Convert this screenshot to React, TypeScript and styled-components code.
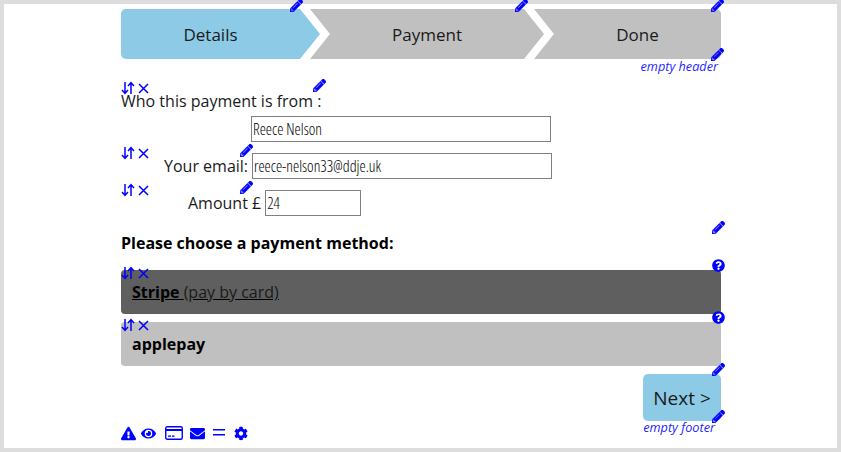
import React from 'react';
import styled, { createGlobalStyle } from 'styled-components';
import {
  FaCog,
  FaEnvelope,
  FaExclamationTriangle,
  FaEye,
  FaPencilAlt,
  FaQuestionCircle,
} from 'react-icons/fa';

const GlobalStyle = createGlobalStyle`
  html, body {
    margin: 0;
    padding: 0;
    background: #ffffff;
  }
`;

const Frame = styled.div`
  box-sizing: border-box;
  width: 841px;
  height: 452px;
  border: 4px solid #dddddd;
  background: #ffffff;
  font-family: 'Open Sans', sans-serif;
  font-size: 16px;
  color: #1a1a1a;
`;

const Shell = styled.div`
  width: 600px;
  margin-left: 117px;
  padding-top: 5px;
`;

const Steps = styled.div`
  position: relative;
  display: flex;
  height: 50px;
`;

const Step = styled.div<{ $width: number; $active?: boolean; $first?: boolean; $last?: boolean }>`
  box-sizing: border-box;
  width: ${(p) => p.$width}px;
  height: 50px;
  margin-left: ${(p) => (p.$first ? 0 : -10)}px;
  padding-left: ${(p) => (p.$first ? 0 : 20)}px;
  padding-right: ${(p) => (p.$last ? 0 : 20)}px;
  display: flex;
  align-items: center;
  justify-content: center;
  font-size: 17px;
  background: ${(p) => (p.$active ? '#8ccae6' : '#c0c0c0')};
  border-radius: ${(p) => (p.$first ? '5px 0 0 5px' : p.$last ? '0 5px 5px 0' : '0')};
  clip-path: polygon(
    0 0,
    ${(p) => (p.$last ? '100% 0, 100% 100%' : 'calc(100% - 20px) 0, 100% 50%, calc(100% - 20px) 100%')},
    0 100%
    ${(p) => (p.$first ? '' : ', 20px 50%')}
  );
`;

const Note = styled.div`
  height: 30px;
  padding-top: 1px;
  padding-right: 3px;
  text-align: right;
  font-size: 12.7px;
  line-height: 12px;
  font-style: italic;
  color: #1f1fff;
`;

const Pin = styled.span<{ $top: number; $left: number }>`
  position: absolute;
  top: ${(p) => p.$top}px;
  left: ${(p) => p.$left}px;
  display: flex;
  color: #0000ff;
  font-size: 13px;
  z-index: 2;
`;

const PencilPin = styled(Pin)`
  svg {
    stroke: currentColor;
    stroke-width: 18px;
  }
`;

const Row = styled.div<{ $indent?: number; $height: number; $gap?: number }>`
  position: relative;
  display: flex;
  align-items: center;
  gap: 4px;
  height: ${(p) => p.$height}px;
  padding-left: ${(p) => p.$indent ?? 0}px;
  margin-bottom: ${(p) => p.$gap ?? 0}px;
`;

const Field = styled.input<{ $width: number }>`
  box-sizing: border-box;
  width: ${(p) => p.$width}px;
  height: 26px;
  padding: 0 0 0 1px;
  border: 1px solid #808080;
  border-radius: 0;
  background: #ffffff;
  font-family: 'Open Sans', sans-serif;
  font-size: 15.7px;
  font-weight: 300;
  font-stretch: 75%;
  color: #000000;
  outline: none;
`;

const Heading = styled.div`
  position: relative;
  height: 22px;
  line-height: 22px;
  margin: 16px 0 16px;
  font-weight: 700;
  color: #000000;
`;

const Method = styled.div<{ $selected?: boolean }>`
  position: relative;
  box-sizing: border-box;
  height: 44px;
  margin-bottom: 8px;
  padding: 11px 11px 0;
  line-height: 22px;
  border-radius: 4px;
  background: ${(p) => (p.$selected ? '#5f5f5f' : '#c0c0c0')};
  color: #000000;
  text-decoration: ${(p) => (p.$selected ? 'underline' : 'none')};
`;

const MethodName = styled.b`
  font-weight: 700;
`;

const MethodHint = styled.span`
  color: #1a1a1a;
`;

const Actions = styled.div`
  position: relative;
  display: flex;
  justify-content: flex-end;
`;

const NextButton = styled.button`
  box-sizing: border-box;
  width: 78px;
  height: 47px;
  padding: 0;
  border: none;
  border-radius: 5px;
  background: #8ccae6;
  font-family: 'Open Sans', sans-serif;
  font-size: 19px;
  color: #1a1a1a;
`;

const FooterNote = styled.div`
  height: 12px;
  margin-top: -1px;
  padding-top: 1px;
  padding-right: 6px;
  text-align: right;
  font-size: 12.7px;
  line-height: 12px;
  font-style: italic;
  color: #1f1fff;
`;

const Toolbar = styled.div`
  display: flex;
  align-items: center;
  margin-top: -8px;
  height: 16px;
  color: #0000ff;
  font-size: 15px;
`;

const Tool = styled.span<{ $width: number }>`
  display: flex;
  align-items: center;
  width: ${(p) => p.$width}px;
`;

const SortControls = styled.span<{ $top: number }>`
  position: absolute;
  top: ${(p) => p.$top}px;
  left: 0;
  display: flex;
  align-items: center;
  gap: 2px;
  z-index: 2;
`;

const SwapIcon = () => (
  <svg width="14" height="14" viewBox="0 0 14 14" fill="none" stroke="#0000ff" strokeWidth="1.5">
    <path d="M4 1v11M1 9l3 3.4L7 9" />
    <path d="M10 13V2M7 5l3-3.4L13 5" />
  </svg>
);

const CloseIcon = () => (
  <svg width="13" height="13" viewBox="0 0 13 13" fill="none" stroke="#0000ff" strokeWidth="1.5">
    <path d="M2 2l9 9M11 2l-9 9" />
  </svg>
);

const CardIcon = () => (
  <svg width="18" height="14" viewBox="0 0 18 14">
    <rect x="0.75" y="0.75" width="16.5" height="12.5" rx="1.5" fill="none" stroke="#0000ff" strokeWidth="1.4" />
    <rect x="1" y="3" width="16" height="2" fill="#0000ff" />
    <rect x="3" y="9.5" width="3" height="1.3" fill="#0000ff" />
    <rect x="7" y="9.5" width="2.5" height="1.3" fill="#0000ff" />
  </svg>
);

const EqualsIcon = () => (
  <svg width="12" height="14" viewBox="0 0 12 14" fill="#0000ff">
    <rect x="0" y="3" width="12" height="1.5" />
    <rect x="0" y="8" width="12" height="1.5" />
  </svg>
);

const Sort = ({ top }: { top: number }) => (
  <SortControls $top={top}>
    <SwapIcon />
    <CloseIcon />
  </SortControls>
);

const Pencil = ({ top, left }: { top: number; left: number }) => (
  <PencilPin $top={top} $left={left}>
    <FaPencilAlt />
  </PencilPin>
);

const App: React.FC = () => {
  return (
    <Frame>
      <GlobalStyle />
      <Shell>
        <Steps>
          <Step $width={199} $active $first>Details</Step>
          <Step $width={234}>Payment</Step>
          <Step $width={187} $last>Done</Step>
          <Pencil top={-10} left={169} />
          <Pencil top={-10} left={394} />
          <Pencil top={-10} left={590} />
          <Pencil top={39} left={590} />
        </Steps>
        <Note>empty header</Note>

        <Row $height={22} $gap={4}>
          <Sort top={-9} />
          Who this payment is from :
          <Pencil top={-11} left={192} />
        </Row>
        <Row $height={26} $indent={130} $gap={11}>
          <Field $width={300} defaultValue="Reece Nelson" readOnly />
        </Row>
        <Row $height={26} $indent={43} $gap={11}>
          <Sort top={-7} />
          Your email:
          <Field $width={300} defaultValue="reece-nelson33@ddje.uk" readOnly />
          <Pencil top={-9} left={119} />
        </Row>
        <Row $height={26} $indent={67}>
          <Sort top={-7} />
          Amount £
          <Field $width={96} defaultValue="24" readOnly />
          <Pencil top={-9} left={119} />
        </Row>

        <Heading>
          Please choose a payment method:
          <Pencil top={-11} left={591} />
        </Heading>

        <Method $selected>
          <Sort top={-4} />
          <MethodName>Stripe </MethodName>
          <MethodHint>(pay by card)</MethodHint>
          <Pin $top={-11} $left={591}>
            <FaQuestionCircle />
          </Pin>
        </Method>
        <Method>
          <Sort top={-4} />
          <MethodName>applepay</MethodName>
          <Pin $top={-11} $left={591}>
            <FaQuestionCircle />
          </Pin>
        </Method>

        <Actions>
          <NextButton>Next &gt;</NextButton>
          <Pencil top={-11} left={591} />
          <Pencil top={36} left={591} />
        </Actions>
        <FooterNote>empty footer</FooterNote>
        <Toolbar>
          <Tool $width={20}><FaExclamationTriangle /></Tool>
          <Tool $width={24}><FaEye /></Tool>
          <Tool $width={25}><CardIcon /></Tool>
          <Tool $width={23}><FaEnvelope /></Tool>
          <Tool $width={21}><EqualsIcon /></Tool>
          <Tool $width={14}><FaCog /></Tool>
        </Toolbar>
      </Shell>
    </Frame>
  );
};

export default App;
